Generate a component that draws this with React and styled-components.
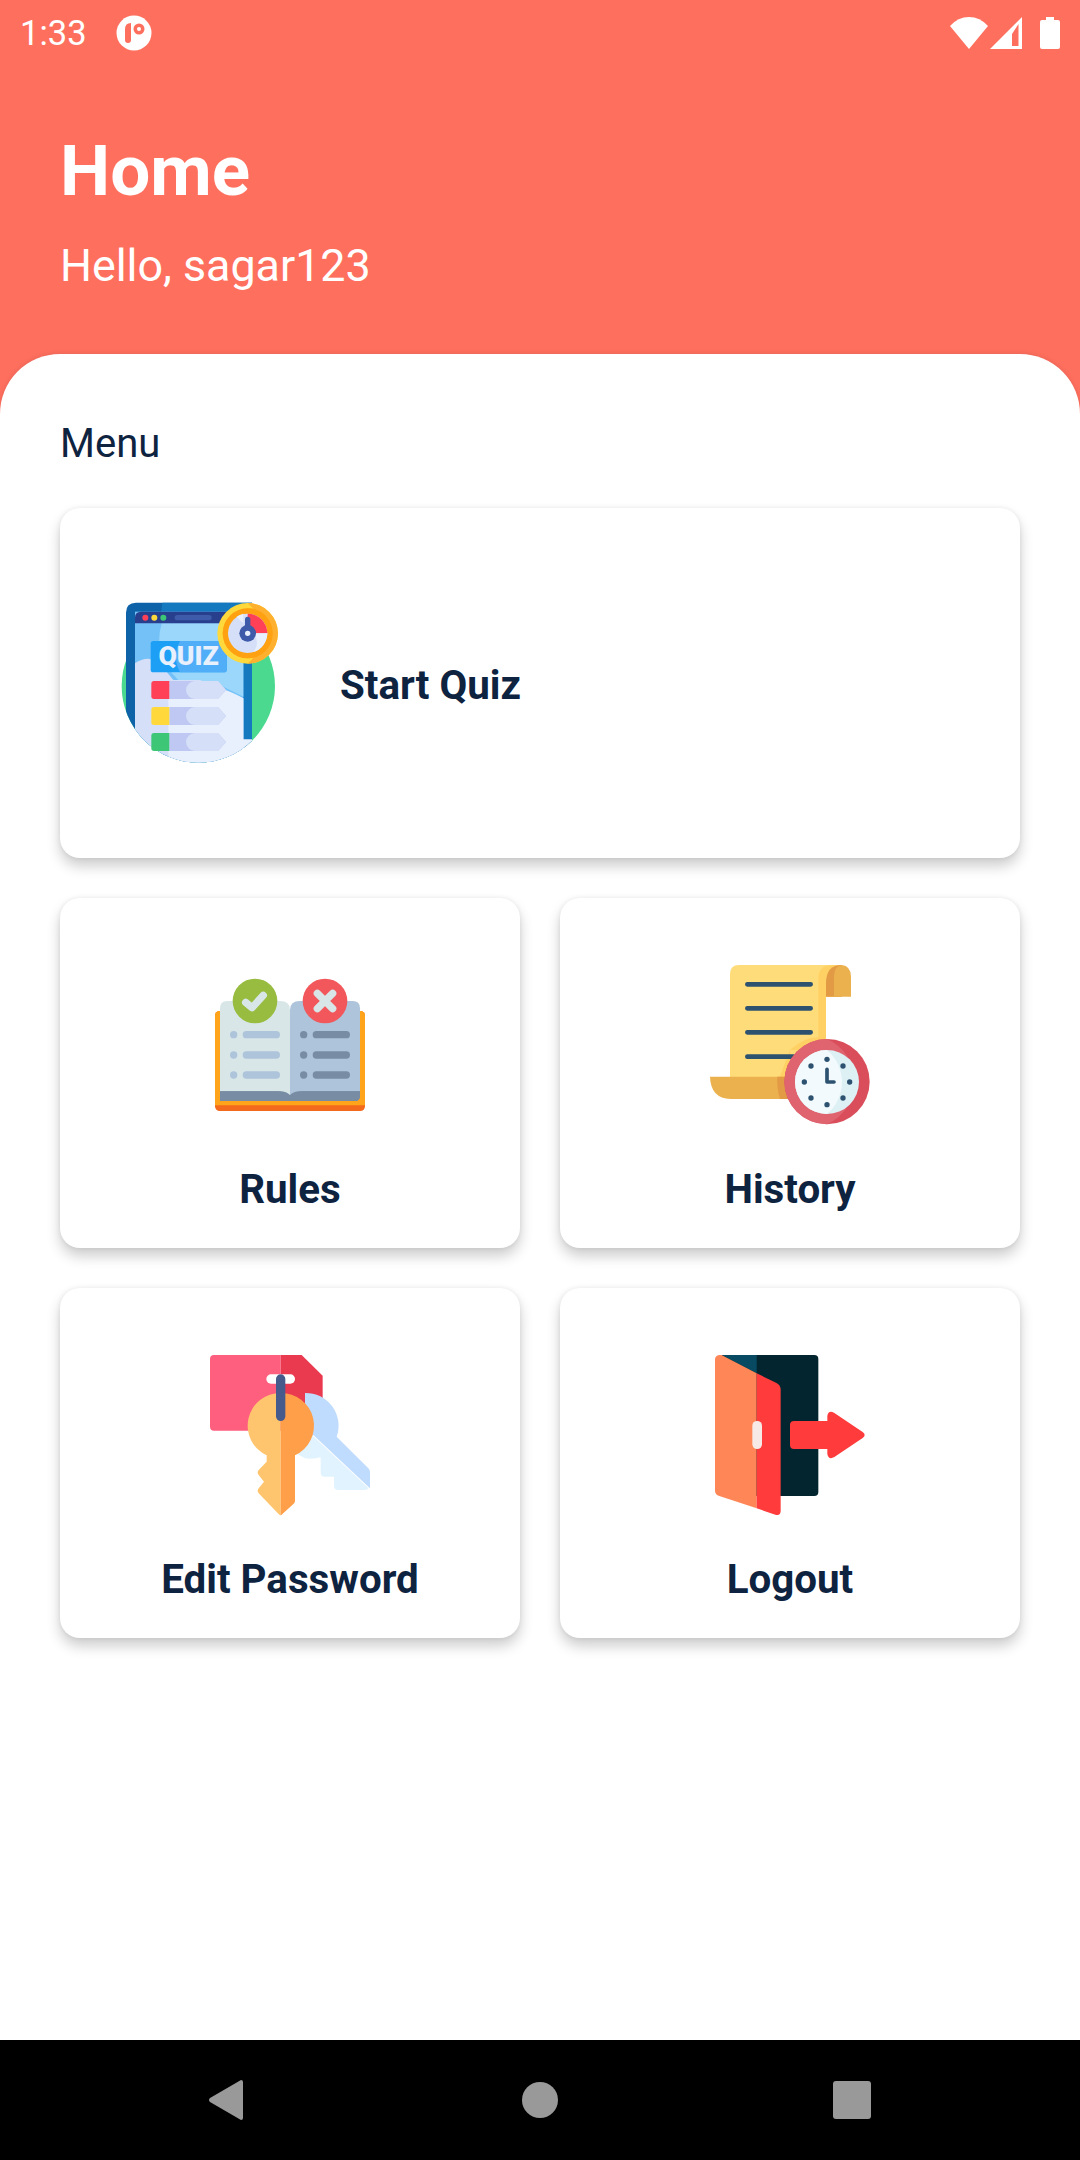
import React from "react";
import styled, { createGlobalStyle } from "styled-components";

const GlobalStyle = createGlobalStyle`
  html, body {
    margin: 0;
    padding: 0;
    background: #fff;
    font-family: Roboto, "Liberation Sans", sans-serif;
  }
`;

const Screen = styled.div`
  width: 1080px;
  height: 2160px;
  display: flex;
  flex-direction: column;
  overflow: hidden;
  background: #ff6f5e;
`;

const StatusBar = styled.div`
  height: 66px;
  display: flex;
  align-items: center;
  padding: 0 20px 0 20px;
  color: #fff;
  flex-shrink: 0;
`;

const Clock = styled.span`
  font-size: 34.5px;
  line-height: 62px;
  width: 96px;
`;

const StatusRight = styled.div`
  margin-left: auto;
  display: flex;
  align-items: center;
`;

const Glyph = styled.svg`
  display: block;
  flex-shrink: 0;
  margin-left: ${(p) => p.$gap || 0}px;
`;

const Header = styled.header`
  height: 288px;
  padding: 66px 60px 0;
  box-sizing: border-box;
  color: #fff;
  flex-shrink: 0;
`;

const Title = styled.h1`
  margin: 0;
  font-size: 71px;
  line-height: 78px;
  font-weight: 700;
`;

const Greeting = styled.p`
  margin: 30px 0 0;
  font-size: 44.8px;
  line-height: 52px;
  font-weight: 400;
`;

const Sheet = styled.main`
  flex: 1;
  background: #fff;
  border-radius: 60px 60px 0 0;
  box-shadow: 0 -1px 5px rgba(0, 0, 0, 0.09);
  padding: 67px 60px 0;
`;

const SectionLabel = styled.div`
  color: #0e2340;
  font-size: 40px;
  line-height: 46px;
  height: 87px;
`;

const MenuGrid = styled.div`
  display: grid;
  grid-template-columns: 460px 460px;
  grid-auto-rows: 350px;
  gap: 40px 40px;
`;

const Card = styled.div`
  background: #fff;
  border-radius: 20px;
  box-shadow: 0 8px 14px rgba(0, 0, 0, 0.2), 0 0 5px rgba(0, 0, 0, 0.07);
  display: flex;
  flex-direction: ${(p) => (p.$wide ? "row" : "column")};
  align-items: center;
  grid-column: ${(p) => (p.$wide ? "1 / span 2" : "auto")};
  padding: ${(p) => (p.$wide ? "0 0 0 30px" : "52px 0 0")};
`;

const CardLabel = styled.div`
  color: #0e2340;
  font-size: 40.3px;
  line-height: 46px;
  font-weight: 700;
  margin: ${(p) => (p.$wide ? "5px 0 0 30px" : "27px 0 0")};
`;

const NavBar = styled.nav`
  height: 120px;
  background: #000;
  flex-shrink: 0;
  display: flex;
  align-items: center;
  padding-left: 208px;
`;

const QuizIcon = () => (
  <Glyph width="220" height="206" viewBox="0 0 660 618">
    <defs>
      <clipPath id="quizClip">
        <path d="M95 60H555V318A230 230 0 0 1 95 318Z" />
      </clipPath>
    </defs>
    <circle cx="325" cy="318" r="230" fill="#4ad98f" />
    <g clipPath="url(#quizClip)">
      <path d="M108 98Q108 68 138 68H486V560H108Z" fill="#0e62a8" />
      <path d="M218 68H486V560H218Q205 90 218 68Z" fill="#1479bf" />
      <rect x="135" y="95" width="325" height="480" fill="#74c1f8" />
      <path d="M215 130H460V350Q420 330 400 320L265 300Q235 270 215 240Q200 180 215 130Z" fill="#9ad7fb" />
      <path d="M135 250Q170 225 205 245L250 300H330L460 355V580H135Z" fill="#d5dff8" />
      <path d="M235 305H330Q420 330 460 355V478L486 478V580H235Z" fill="#e8effd" />
    </g>
    <path d="M135 113Q135 95 153 95H460V130H135Z" fill="#283f8e" />
    <circle cx="166" cy="113" r="9" fill="#ff4057" />
    <circle cx="193" cy="113" r="9" fill="#ffd93b" />
    <circle cx="220" cy="113" r="9" fill="#3cc676" />
    <rect x="254" y="105" width="111" height="16" rx="8" fill="#3d5ba8" />
    <rect x="182" y="183" width="228" height="94" rx="8" fill="#1c9ff5" />
    <path d="M270 183H402Q410 183 410 191V269Q410 277 402 277H270Q245 230 270 183Z" fill="#4faef7" />
    <text x="296" y="256" textAnchor="middle" fontFamily="Roboto, sans-serif" fontWeight="900" fontSize="80" fill="#e8effd">QUIZ</text>
    {[
      [303, "#ff4057"],
      [381, "#ffd93b"],
      [459, "#3cc676"],
    ].map(([y, c]) => (
      <g key={y}>
        <path d={`M238 ${y}H384L408 ${y + 27}L384 ${y + 54}H238Z`} fill="#bec8f2" />
        <path d={`M315 ${y}H384L408 ${y + 27}L384 ${y + 54}H315A27 27 0 0 1 315 ${y}Z`} fill="#d5dff8" />
        <path d={`M192 ${y}H238V${y + 54}H192Q184 ${y + 54} 184 ${y + 46}V${y + 8}Q184 ${y} 192 ${y}Z`} fill={c} />
      </g>
    ))}
    <circle cx="473" cy="160" r="91" fill="#ffd93b" />
    <path d="M473 69A91 91 0 0 1 473 251A120 120 0 0 0 473 69Z" fill="#ffb02e" />
    <circle cx="473" cy="160" r="75" fill="#ff9a00" />
    <path d="M398 160A75 75 0 0 1 548 160A75 75 0 0 1 398 160Z" fill="#ffb02e" opacity="0.35" />
    <circle cx="473" cy="160" r="59" fill="#d5dff8" />
    <path d="M473 101A59 59 0 0 1 532 160H473Z" fill="#ff4057" />
    <path d="M490 160H532A59 59 0 0 1 490 216Q512 190 490 160Z" fill="#e8effd" />
    <path d="M440 110Q448 104 460 101V130Z" fill="#e8effd" />
    <rect x="465" y="110" width="16" height="50" rx="8" fill="#3d5ba8" />
    <circle cx="473" cy="160" r="25" fill="#3d5ba8" />
    <circle cx="473" cy="160" r="8" fill="#e8effd" />
  </Glyph>
);

const RulesIcon = () => (
  <Glyph width="200" height="190" viewBox="0 -30 600 570">
    <rect x="75" y="153" width="450" height="300" rx="14" fill="#f46a1c" />
    <path d="M75 167Q75 153 89 153H511Q525 153 525 167V436H75Z" fill="#ffa41b" />
    <path d="M90 380H510V408Q510 423 495 423H90Z" fill="#788da3" />
    <path d="M90 145Q90 123 112 123H270Q300 123 300 150V405Q290 395 270 394H90Z" fill="#d8e6e8" />
    <path d="M510 145Q510 123 488 123H330Q300 123 300 150V405Q310 395 330 394H510Z" fill="#adc4da" />
    <path d="M90 394H265Q295 396 300 423H105Q90 423 90 408Z" fill="#788da3" />
    <path d="M510 394H335Q305 396 300 423H495Q510 423 510 408Z" fill="#788da3" />
    {[224, 285, 345].map((y) => (
      <g key={y}>
        <circle cx="131" cy={y} r="11" fill="#adc4da" />
        <rect x="158" y={y - 11} width="112" height="22" rx="11" fill="#adc4da" />
        <circle cx="341" cy={y} r="11" fill="#788da3" />
        <rect x="368" y={y - 11} width="112" height="22" rx="11" fill="#788da3" />
      </g>
    ))}
    <circle cx="195" cy="123" r="67" fill="#97bc3f" />
    <path d="M167 127L186 143L220 106" fill="none" stroke="#d8e6e8" strokeWidth="22" strokeLinecap="round" strokeLinejoin="round" />
    <circle cx="405" cy="123" r="67" fill="#f2585b" />
    <path d="M382 100L428 146M428 100L382 146" fill="none" stroke="#d8e6e8" strokeWidth="22" strokeLinecap="round" />
  </Glyph>
);

const HistoryIcon = () => {
  const ticks = [
    [411, 328],
    [459, 348],
    [479, 396],
    [459, 444],
    [411, 464],
    [363, 444],
    [343, 396],
    [363, 348],
  ];
  return (
    <Glyph width="200" height="190" viewBox="0 0 600 570">
      <path d="M120 72Q120 45 147 45H455V140H408V400H120Z" fill="#ffdc7a" />
      <path d="M385 85Q385 45 430 45H455V140H408V300H300L262 400H300V300Q340 262 385 262Z" fill="#ffd063" />
      <path d="M408 140V100Q408 45 455 45V140Z" fill="#e39a45" />
      <path d="M455 45Q483 48 483 80V140H432V80Q432 50 455 45Z" fill="#ebb14e" />
      <path d="M60 380H300V447H122Q62 445 60 380Z" fill="#ebb14e" />
      <path d="M262 380H300V447H270Q260 415 262 380Z" fill="#e39a45" />
      <g stroke="#2c5270" strokeWidth="14" strokeLinecap="round">
        <path d="M172 103H362M172 175H362M172 247H362M172 320H310" />
      </g>
      <circle cx="411" cy="395" r="128" fill="#d94e5a" />
      <path d="M411 267A128 128 0 0 0 411 523A140 140 0 0 0 411 267Z" fill="#df6470" />
      <circle cx="411" cy="396" r="96" fill="#ddf0f4" />
      <path d="M411 300A96 96 0 0 0 411 492A125 125 0 0 0 411 300Z" fill="#f2fafd" />
      {ticks.map(([x, y]) => (
        <circle key={`${x}-${y}`} cx={x} cy={y} r="8" fill="#2c5270" />
      ))}
      <path d="M411 358V396H432" fill="none" stroke="#2c5270" strokeWidth="11" strokeLinecap="round" strokeLinejoin="round" />
    </Glyph>
  );
};

const KeyIcon = () => (
  <Glyph width="200" height="190" viewBox="0 0 600 570">
    <path d="M72 45H272V272H72Q60 272 60 260V57Q60 45 72 45Z" fill="#ff5f7e" />
    <path d="M272 45H335L398 107V272H272Z" fill="#ea3a50" />
    <rect x="229" y="103" width="86" height="28" rx="14" fill="#fff" />
    <path d="M345 159A98 98 0 0 1 440 290L535 385Q540 390 540 397V445L370 285L345 300Z" fill="#bfdbfd" />
    <path d="M360 280L536 445Q532 450 525 450H445Q432 450 432 438V410H405Q392 410 392 398V352Q370 358 345 355L300 330Z" fill="#e1f3ff" />
    <path d="M272 159A98 98 0 0 0 230 346V365L206 390Q200 398 206 405L222 425L206 445Q200 452 206 460L265 521Q272 527 272 525Z" fill="#ffc56e" />
    <path d="M272 159A98 98 0 0 1 315 346V483Q315 488 311 491L278 521Q272 527 272 525Z" fill="#ff9f4a" />
    <rect x="258" y="103" width="28" height="140" rx="14" fill="#475a8c" />
  </Glyph>
);

const DoorIcon = () => (
  <Glyph width="200" height="190" viewBox="0 0 600 570">
    <path d="M95 45H373Q385 45 385 57V456Q385 468 373 468H95Z" fill="#03252f" />
    <path d="M95 45H200V100Z" fill="#074a62" />
    <path d="M88 45Q92 44 96 46L200 100V505L88 468Q75 464 75 452V58Q75 47 88 45Z" fill="#ff8657" />
    <path d="M200 100L258 128Q272 135 272 148V512Q272 528 256 524L200 505Z" fill="#ff3b3b" />
    <rect x="187" y="243" width="29" height="84" rx="14" fill="#f7eae6" />
    <path d="M312 243H412V228Q415 210 432 218L518 276Q530 285 518 294L432 352Q415 360 412 342V327H312Q300 327 300 315V255Q300 243 312 243Z" fill="#ff3b3b" />
  </Glyph>
);

const App = () => {
  return (
    <>
      <GlobalStyle />
      <Screen>
        <StatusBar>
          <Clock>1:33</Clock>
          <Glyph width="36" height="36" viewBox="0 0 36 36">
            <circle cx="18" cy="18" r="17.5" fill="#fff" />
            <path d="M9 25V14Q9 8 15 8V25Q15 28 12 28Q9 28 9 25Z" fill="#ff6f5e" />
            <circle cx="23" cy="14" r="5.5" fill="#ff6f5e" />
            <circle cx="23" cy="14" r="2" fill="#fff" />
          </Glyph>
          <StatusRight>
            <Glyph width="38" height="33" viewBox="0 0 38 33">
              <path d="M0 9Q8 0 19 0Q30 0 38 9L19 32Z" fill="#fff" />
            </Glyph>
            <Glyph $gap={2} width="32" height="32" viewBox="0 0 32 32">
              <path fillRule="evenodd" d="M32 0V32H0ZM28.5 7L22 17V29H28.5Z" fill="#fff" />
            </Glyph>
            <Glyph $gap={18} width="20" height="32" viewBox="0 0 20 32">
              <path d="M6 3V0H14V3H18Q20 3 20 5V30Q20 32 18 32H2Q0 32 0 30V5Q0 3 2 3Z" fill="#fff" />
            </Glyph>
          </StatusRight>
        </StatusBar>
        <Header>
          <Title>Home</Title>
          <Greeting>Hello, sagar123</Greeting>
        </Header>
        <Sheet>
          <SectionLabel>Menu</SectionLabel>
          <MenuGrid>
            <Card $wide>
              <QuizIcon />
              <CardLabel $wide>Start Quiz</CardLabel>
            </Card>
            <Card>
              <RulesIcon />
              <CardLabel>Rules</CardLabel>
            </Card>
            <Card>
              <HistoryIcon />
              <CardLabel>History</CardLabel>
            </Card>
            <Card>
              <KeyIcon />
              <CardLabel>Edit Password</CardLabel>
            </Card>
            <Card>
              <DoorIcon />
              <CardLabel>Logout</CardLabel>
            </Card>
          </MenuGrid>
        </Sheet>
        <NavBar>
          <Glyph width="35" height="40" viewBox="0 0 35 40">
            <path d="M33 0Q35 0 35 2V38Q35 40 33 40L2 22Q0 20 2 18Z" fill="#999" />
          </Glyph>
          <Glyph $gap={279} width="36" height="36" viewBox="0 0 36 36">
            <circle cx="18" cy="18" r="18" fill="#999" />
          </Glyph>
          <Glyph $gap={275} width="38" height="38" viewBox="0 0 38 38">
            <rect width="38" height="38" rx="3" fill="#999" />
          </Glyph>
        </NavBar>
      </Screen>
    </>
  );
};

export default App;
